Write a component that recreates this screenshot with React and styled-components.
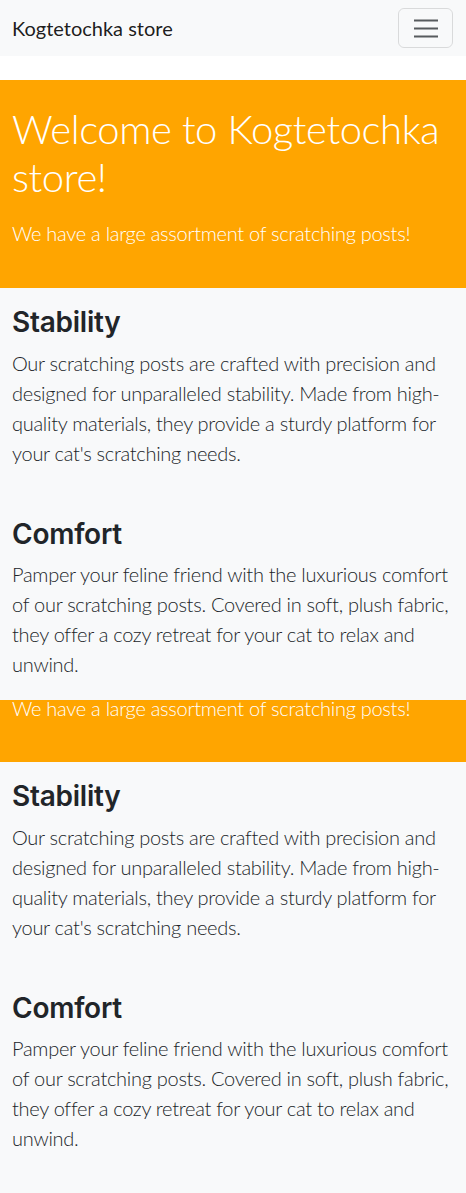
import React from "react";
import styled, { createGlobalStyle } from "styled-components";

const GlobalStyle = createGlobalStyle`
  html, body {
    margin: 0;
    padding: 0;
    background: #ffffff;
  }
  body {
    font-family: "Lato", "Open Sans", sans-serif;
    color: #212529;
    -webkit-font-smoothing: antialiased;
  }
  * { box-sizing: border-box; }
`;

const Page = styled.div`
  min-height: 100vh;
  display: flex;
  flex-direction: column;
`;

const Navbar = styled.nav`
  height: 56px;
  display: flex;
  align-items: center;
  justify-content: space-between;
  padding: 0 13px 0 12px;
  background: #f8f9fa;
  margin-bottom: 24px;
`;

const Brand = styled.a`
  font-family: "Lato", sans-serif;
  font-size: 20px;
  font-weight: 400;
  color: #000000e6;
  text-decoration: none;
  line-height: 30px;
`;

const Toggler = styled.button`
  width: 55px;
  height: 40px;
  display: flex;
  align-items: center;
  justify-content: center;
  background: transparent;
  border: 1px solid rgba(0, 0, 0, 0.12);
  border-radius: 6px;
  padding: 0;
  cursor: pointer;
`;

const Main = styled.main`
  flex: 1;
  background: #f8f9fa;
`;

const Hero = styled.header`
  background: #ffa500;
  color: #ffffff;
  padding: ${(p) => (p.$clipped ? "0 12px" : "25px 12px 40px")};
  height: ${(p) => (p.$clipped ? "62px" : "auto")};
`;

const Title = styled.h1`
  margin: 0 0 17px;
  font-family: "Lato", sans-serif;
  font-size: 40px;
  font-weight: 300;
  line-height: 48px;
  letter-spacing: -0.4px;
`;

const Lead = styled.p`
  margin: 0;
  font-family: "Lato", sans-serif;
  font-size: 20px;
  font-weight: 300;
  line-height: ${(p) => (p.$clipped ? "16px" : "30px")};
  letter-spacing: -0.28px;
`;

const Section = styled.section`
  display: flex;
  flex-direction: column;
  gap: 50px;
  padding: 18px 12px 21px;
  background: #f8f9fa;
`;

const Feature = styled.article`
  display: flex;
  flex-direction: column;
  gap: 8px;
`;

const Heading = styled.h2`
  margin: 0;
  font-family: "Inter", sans-serif;
  font-size: 28px;
  font-weight: 600;
  line-height: 33.6px;
  letter-spacing: -0.25px;
  color: #212529;
`;

const Text = styled.p`
  margin: 0;
  font-family: "Lato", sans-serif;
  font-size: 20px;
  font-weight: 300;
  line-height: 30px;
  letter-spacing: -0.28px;
  color: #212529;
`;

const features = [
  {
    title: "Stability",
    text:
      "Our scratching posts are crafted with precision and designed for unparalleled stability. Made from high-quality materials, they provide a sturdy platform for your cat's scratching needs.",
  },
  {
    title: "Comfort",
    text:
      "Pamper your feline friend with the luxurious comfort of our scratching posts. Covered in soft, plush fabric, they offer a cozy retreat for your cat to relax and unwind.",
  },
];

const LEAD = "We have a large assortment of scratching posts!";

function MenuIcon() {
  return (
    <svg width="30" height="30" viewBox="0 0 30 30" aria-hidden="true">
      <path
        d="M3 7.5h24M3 15.5h24M3 23.5h24"
        stroke="rgba(33,37,41,0.75)"
        strokeWidth="2"
        strokeLinecap="butt"
        fill="none"
      />
    </svg>
  );
}

function Features() {
  return (
    <Section>
      {features.map((f) => (
        <Feature key={f.title}>
          <Heading>{f.title}</Heading>
          <Text>{f.text}</Text>
        </Feature>
      ))}
    </Section>
  );
}

export default function App() {
  return (
    <Page>
      <GlobalStyle />
      <Navbar>
        <Brand href="#">Kogtetochka store</Brand>
        <Toggler aria-label="Toggle navigation">
          <MenuIcon />
        </Toggler>
      </Navbar>
      <Main>
        <Hero>
          <Title>Welcome to Kogtetochka store!</Title>
          <Lead>{LEAD}</Lead>
        </Hero>
        <Features />
        <Hero $clipped>
          <Lead $clipped>{LEAD}</Lead>
        </Hero>
        <Features />
      </Main>
    </Page>
  );
}
